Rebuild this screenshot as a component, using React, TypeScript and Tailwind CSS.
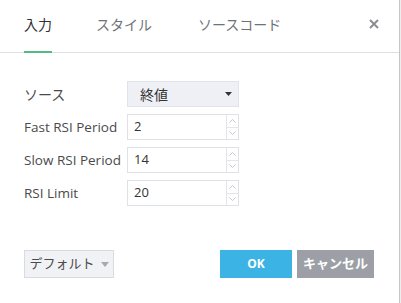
import React from "react";

const font = { fontFamily: '"Open Sans", "Noto Sans CJK JP", sans-serif' };

function NumInput({ value }: { value: string }) {
  return (
    <div className="flex w-[112px] h-[26px] border border-[#dfe1e6] bg-white">
      <div className="flex-1 flex items-center pl-[6px] text-[13px] text-[#333]">{value}</div>
      <div className="w-[12px] flex flex-col border-l border-[#e3e5e9]">
        <div className="flex-1 flex items-center justify-center border-b border-[#e3e5e9]">
          <svg width="7" height="4" viewBox="0 0 7 4"><path d="M0.5 3.5 L3.5 0.5 L6.5 3.5" fill="none" stroke="#c4c7cc" strokeWidth="1" /></svg>
        </div>
        <div className="flex-1 flex items-center justify-center">
          <svg width="7" height="4" viewBox="0 0 7 4"><path d="M0.5 0.5 L3.5 3.5 L6.5 0.5" fill="none" stroke="#c4c7cc" strokeWidth="1" /></svg>
        </div>
      </div>
    </div>
  );
}

export default function App() {
  return (
    <div className="flex w-[401px] h-[303px] bg-white" style={font}>
      <div className="w-[399px] h-full flex flex-col">
        <div className="relative h-[53px] border-b border-[#dcdfe3] flex items-start pl-[24px] pt-[15px]">
          <div className="relative text-[14px] text-[#333] leading-[20px]">
            入力
            <div className="absolute left-0 right-0 top-[36px] h-[2px] bg-[#53b987]" />
          </div>
          <div className="ml-[44px] text-[14px] text-[#6f7378] leading-[20px]">スタイル</div>
          <div className="ml-[46px] text-[14px] text-[#6f7378] leading-[20px]">ソースコード</div>
          <div className="absolute left-[369px] top-[19px]">
            <svg width="10" height="10" viewBox="0 0 10 10"><path d="M1 1 L9 9 M9 1 L1 9" stroke="#8a8d92" strokeWidth="2" /></svg>
          </div>
        </div>
        <div className="flex flex-col pl-[24px] pt-[28px] gap-[7px]">
          <div className="flex items-center h-[26px]">
            <div className="w-[103px] text-[14px] text-[#4a4a4a]">ソース</div>
            <div className="flex items-center w-[112px] h-[26px] bg-[#eef0f5] border border-[#e1e3e8] pl-[12px] pr-[6px]">
              <span className="flex-1 text-[14px] text-[#333]">終値</span>
              <svg width="7" height="4" viewBox="0 0 7 4"><path d="M0 0 L7 0 L3.5 4 Z" fill="#333" /></svg>
            </div>
          </div>
          <div className="flex items-center h-[26px]">
            <div className="w-[103px] text-[13.5px] text-[#4a4a4a]">Fast RSI Period</div>
            <NumInput value="2" />
          </div>
          <div className="flex items-center h-[26px]">
            <div className="w-[103px] text-[13.5px] text-[#4a4a4a]">Slow RSI Period</div>
            <NumInput value="14" />
          </div>
          <div className="flex items-center h-[26px]">
            <div className="w-[103px] text-[13.5px] text-[#4a4a4a]">RSI Limit</div>
            <NumInput value="20" />
          </div>
        </div>
        <div className="flex items-center pl-[24px] mt-[44px]">
          <div className="flex items-center justify-center gap-[6px] w-[90px] h-[28px] bg-[#f0f2f6] border border-[#d8dbe0] text-[13px] text-[#4a4a4a]">
            デフォルト
            <svg width="8" height="5" viewBox="0 0 8 5"><path d="M0 0 L8 0 L4 5 Z" fill="#a6a9ae" /></svg>
          </div>
          <div className="ml-[106px] flex items-center justify-center w-[72px] h-[28px] bg-[#3bb3e4] text-white text-[12px] font-bold">OK</div>
          <div className="ml-[5px] flex items-center justify-center w-[77px] h-[28px] bg-[#9d9fa6] text-white text-[13px] font-bold">キャンセル</div>
        </div>
      </div>
      <div className="w-[1px] h-full bg-[#c4c6c9]" />
      <div className="w-[1px] h-full bg-[#eeeeee]" />
    </div>
  );
}
